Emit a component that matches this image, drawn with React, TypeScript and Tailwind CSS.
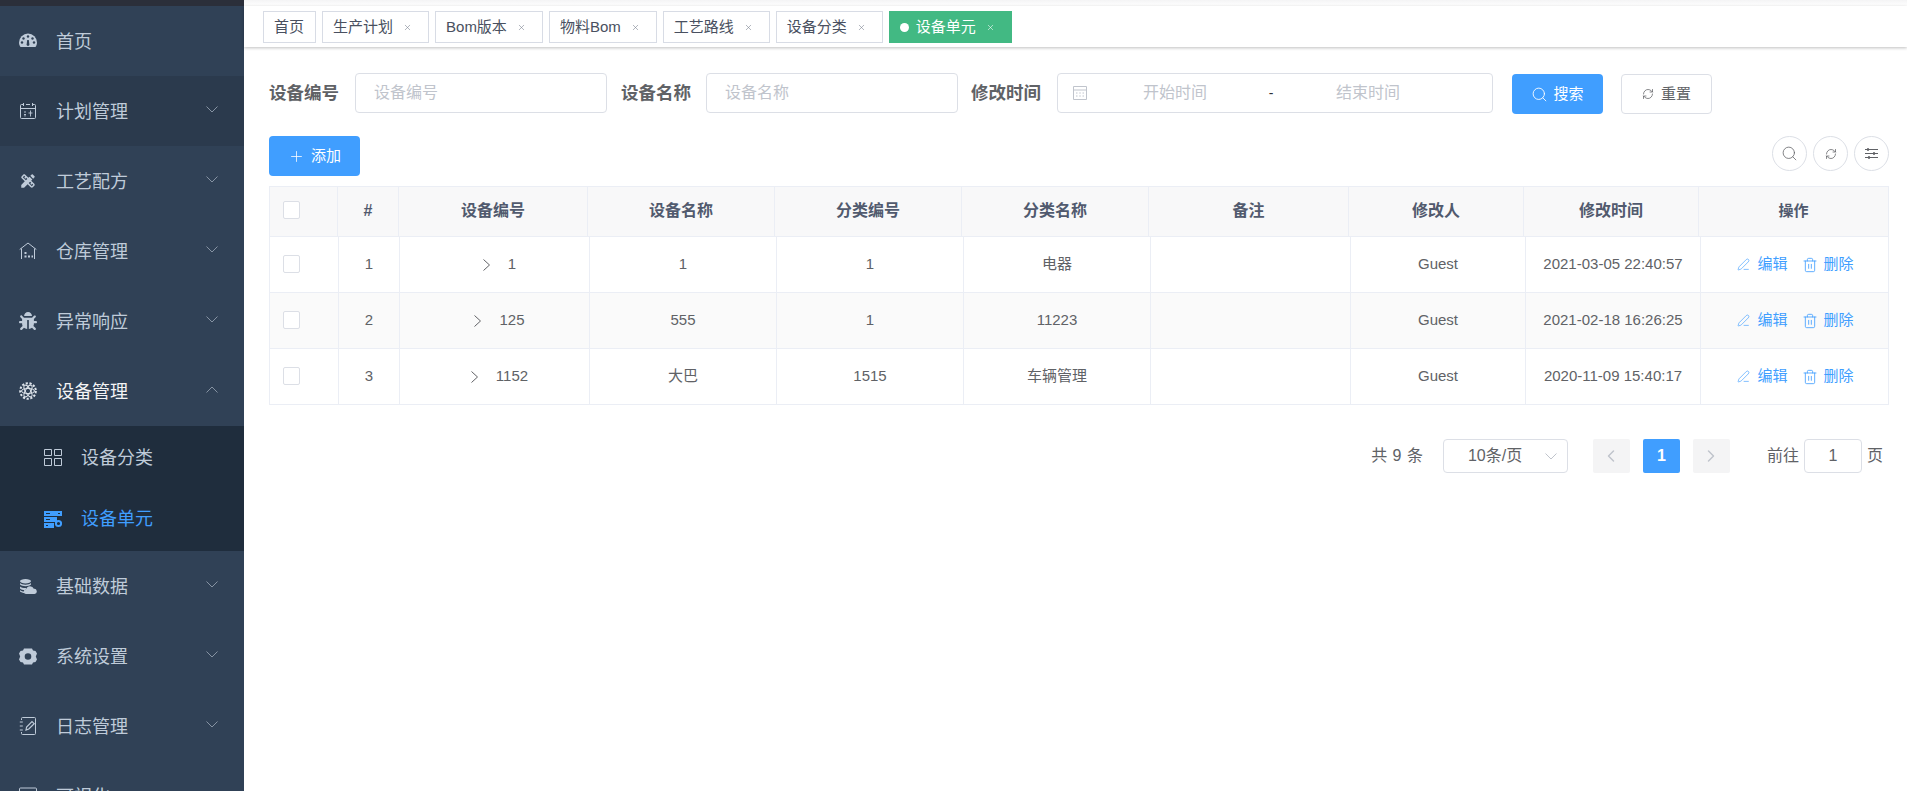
import React from "react";
import { ChevronLeft, ChevronRight, PenLine, Plus, RefreshCw, Search, Trash2, X } from "lucide-react";
import { FaBug } from "react-icons/fa";
import { MdDesignServices } from "react-icons/md";

const Chevron = ({ up = false }: { up?: boolean }) => (
  <svg width="12" height="7" viewBox="0 0 12 7" fill="none" stroke="#8693a3" strokeWidth="1" className="ml-auto mr-[26px] mt-[-4px] shrink-0">
    <path d={up ? "M.5 6.5 6 1l5.5 5.5" : "M.5.5 6 6 11.5.5"} />
  </svg>
);

const GaugeIcon = () => (
  <svg width="18" height="18" viewBox="0 0 18 18">
    <path d="M1.5 15C.6 13.8 0 12.2 0 10.5a9 9 0 0 1 18 0c0 1.700-.6 3.300-1.500 4.500z" fill="#bfcbd9" />
    <g fill="#304156">
      <circle cx="9" cy="4.500" r="1.200" /><circle cx="4.500" cy="6.500" r="1.200" /><circle cx="13.500" cy="6.500" r="1.200" />
      <circle cx="3" cy="10.500" r="1.200" /><circle cx="15" cy="10.500" r="1.200" />
      <path d="M8.200 8h1.600l.6 4.600a1.400 1.400 0 1 1-2.800 0z" />
    </g>
  </svg>
);

const PlanIcon = () => (
  <svg width="18" height="18" viewBox="0 0 18 18" fill="none" stroke="#bfcbd9" strokeWidth="1">
    <path d="M4 2.500H2.500a1 1 0 0 0-1 1v12a1 1 0 0 0 1 1h13a1 1 0 0 0 1-1v-12a1 1 0 0 0-1-1H14M7 2.500h4M4.500 1v3M13.500 1v3M1.500 6.500h15" />
    <path d="M5 10h2M5 12.500h2M6 12.500v2M9.500 11h4M11.500 8.500v6" strokeWidth=".9" />
  </svg>
);

const StoreIcon = () => (
  <svg width="18" height="18" viewBox="0 0 18 18" fill="none" stroke="#bfcbd9" strokeWidth="1">
    <path d="M.7 7.500 9 1l8.300 6.500M2.500 6.500v10.500M15.500 6.500v10.500" />
    <path d="M5.500 10h2v2h-2zM5.500 13.500h2v2h-2zM9 13.500h2v2H9zM12.500 13.500h1.500v2h-1.500z" fill="#bfcbd9" stroke="none" />
  </svg>
);

const AtomIcon = () => (
  <svg width="18" height="18" viewBox="0 0 18 18" fill="none" stroke="#dfe5ec" strokeWidth="1">
    <circle cx="9" cy="9" r="7.800" strokeWidth="2" strokeDasharray="2.200 1.600" />
    <ellipse cx="9" cy="9" rx="6.500" ry="2.600" />
    <ellipse cx="9" cy="9" rx="6.500" ry="2.600" transform="rotate(60 9 9)" />
    <ellipse cx="9" cy="9" rx="6.500" ry="2.600" transform="rotate(120 9 9)" />
  </svg>
);

const GridIcon = () => (
  <svg width="18" height="17" viewBox="0 0 18 17" fill="none" stroke="#bfcbd9" strokeWidth="1">
    <path d="M.5.500h7v6h-7zM10.500.500h7v6h-7zM.5 9.500h7v7h-7zM10.500 9.500h7v7h-7z" />
  </svg>
);

const UnitIcon = () => (
  <svg width="18" height="17" viewBox="0 0 18 17" fill="#409eff">
    <path d="M0 0h18v5H0zM0 6h13v5H0zM0 12h10v5H0z" />
    <path d="M2 2h4v1H2zM14 2h2v1h-2zM2 8h4v1H2zM2 14h2v1H2z" fill="#1f2d3d" />
    <circle cx="14.500" cy="12.500" r="2.600" fill="none" stroke="#409eff" strokeWidth="2" />
  </svg>
);

const DataIcon = () => (
  <svg width="18" height="15" viewBox="0 0 18 15" fill="#bfcbd9">
    <path d="M1 2.200C1 1 3.500 0 6.500 0S12 1 12 2.200 9.500 4.400 6.500 4.400 1 3.400 1 2.200z" />
    <path d="M1 4c1 1.200 3.400 1.700 5.500 1.700S11 5.200 12 4v1.500c-1 1-3.200 1.700-5.500 1.700S2 6.500 1 5.500zM1 7.500c1 1.100 3.400 1.600 5.500 1.600l1 0-1.500 2.200C3.900 11.200 2 10.500 1 9.500zM1 11c1 1 3 1.500 4.500 1.600L6 14c-2.200 0-4-.7-5-1.500z" />
    <path d="M7.500 15a2.500 2.500 0 0 1-.3-5A4 4 0 0 1 14.800 9.800 2.600 2.600 0 0 1 15.500 15z" />
  </svg>
);

const CogIcon = () => (
  <svg width="18" height="17" viewBox="0 0 18 17" fill="#bfcbd9">
    <path fillRule="evenodd" d="M5 .5h8l1 2 2.500.4L18 5.500l-1.200 3 1.200 3-1.500 2.600-2.500.4-1 2H5l-1-2-2.500-.4L0 11.500l1.200-3L0 5.500l1.500-2.600L4 2.500zM9 5.200a3.300 3.300 0 1 0 0 6.600 3.300 3.300 0 0 0 0-6.600z" />
  </svg>
);

const LogIcon = () => (
  <svg width="18" height="18" viewBox="0 0 18 18" fill="none" stroke="#bfcbd9" strokeWidth="1">
    <path d="M2.500 3V1.500a1 1 0 0 1 1-1h12a1 1 0 0 1 1 1v15a1 1 0 0 1-1 1h-12a1 1 0 0 1-1-1V15M.8 5h3M.8 9h3M.8 13h3" />
    <path d="m7 13 .6-3L13 4.500l2.200 2.200L9.800 12z" strokeWidth="1.200" />
  </svg>
);

const ScreenIcon = () => (
  <svg width="18" height="18" viewBox="0 0 18 18" fill="none" stroke="#bfcbd9" strokeWidth="1">
    <path d="M.5 2a1 1 0 0 1 1-1h15a1 1 0 0 1 1 1v10a1 1 0 0 1-1 1h-15a1 1 0 0 1-1-1z" />
  </svg>
);

const DateIcon = () => (
  <svg width="16" height="16" viewBox="0 0 16 16" fill="none" stroke="#c0c4cc" strokeWidth="1" className="shrink-0">
    <path d="M1.500 1.500h13v13h-13zM1.500 5h13" />
    <path d="M4 8h1.500M7.250 8h1.500M10.500 8H12M4 11h1.500M7.250 11h1.500M10.500 11H12" />
  </svg>
);

const menus = [
  { name: "首页", icon: <GaugeIcon /> },
  { name: "计划管理", icon: <PlanIcon />, arrow: true, hover: true },
  { name: "工艺配方", icon: <MdDesignServices size={18} color="#bfcbd9" />, arrow: true },
  { name: "仓库管理", icon: <StoreIcon />, arrow: true },
  { name: "异常响应", icon: <FaBug size={18} color="#bfcbd9" />, arrow: true },
];

const menusAfter = [
  { name: "基础数据", icon: <DataIcon /> },
  { name: "系统设置", icon: <CogIcon /> },
  { name: "日志管理", icon: <LogIcon /> },
  { name: "可视化", icon: <ScreenIcon /> },
];

const MenuRow = ({ name, icon, arrow, hover }: { name: string; icon: React.ReactNode; arrow?: boolean; hover?: boolean }) => (
  <div className={`h-[70px] flex items-center pl-[19px] text-[18px] text-[#bfcbd9] ${hover ? "bg-[#2b3a4d]" : ""}`}>
    <span className="w-[18px] h-[18px] flex items-center justify-center shrink-0">{icon}</span>
    <span className="ml-[19px] pt-[2px]">{name}</span>
    {arrow && <Chevron />}
  </div>
);

const Sidebar = () => (
  <aside className="w-[244px] shrink-0 h-full overflow-hidden bg-[#304156]">
    <div className="h-[6px] bg-[#2b2f3a]" />
    {menus.map((m) => (
      <MenuRow key={m.name} {...m} />
    ))}
    <div className="h-[70px] flex items-center pl-[19px] text-[18px] text-[#f4f4f5]">
      <span className="w-[18px] h-[18px] flex items-center justify-center shrink-0"><AtomIcon /></span>
      <span className="ml-[19px] pt-[2px]">设备管理</span>
      <Chevron up />
    </div>
    <div className="bg-[#1f2d3d] pb-px">
      <div className="h-[62px] flex items-center pl-[44px] text-[18px] text-[#bfcbd9]">
        <GridIcon />
        <span className="ml-[19px] pt-[2px]">设备分类</span>
      </div>
      <div className="h-[62px] flex items-center pl-[44px] text-[18px] text-[#409eff]">
        <UnitIcon />
        <span className="ml-[19px]">设备单元</span>
      </div>
    </div>
    {menusAfter.map((m) => (
      <MenuRow key={m.name} {...m} arrow />
    ))}
  </aside>
);

const tags = ["生产计划", "Bom版本", "物料Bom", "工艺路线", "设备分类"];

const TagsBar = () => (
  <div className="shrink-0">
    <div className="h-[6px] bg-gradient-to-b from-[#f4f4f5] to-white" />
    <div className="h-[41px] pt-[5px] pl-[19px] flex gap-[6px] items-start bg-white shadow-[0_1px_3px_0_rgba(0,0,0,0.25)] text-[15px]">
      <div className="h-[32px] pl-[10px] pr-[11px] flex items-center border border-[#d8dce5] text-[#495060]">首页</div>
      {tags.map((t) => (
        <div key={t} className="h-[32px] pl-[10px] pr-[16px] flex items-center border border-[#d8dce5] text-[#495060]">
          {t}
          <X size={9} strokeWidth={1.5} className="ml-[10px] text-[#777f8c]" />
        </div>
      ))}
      <div className="h-[32px] pl-[11px] pr-[17px] flex items-center bg-[#42b983] text-white">
        <span className="w-[9px] h-[9px] rounded-full bg-white mr-[7px]" />
        设备单元
        <X size={9} strokeWidth={1.5} className="ml-[10px]" />
      </div>
    </div>
  </div>
);

const FilterBar = () => (
  <div className="flex items-start h-[41px] text-[16px]">
    <label className="leading-[40px] text-[17.5px] font-bold text-[#606266]">设备编号</label>
    <input placeholder="设备编号" className="ml-[16px] w-[252px] h-[40px] px-[18px] border border-[#dcdfe6] rounded-[4px] outline-none placeholder:text-[#c0c4cc]" />
    <label className="ml-[14px] leading-[40px] text-[17.5px] font-bold text-[#606266]">设备名称</label>
    <input placeholder="设备名称" className="ml-[15px] w-[252px] h-[40px] px-[18px] border border-[#dcdfe6] rounded-[4px] outline-none placeholder:text-[#c0c4cc]" />
    <label className="ml-[13px] leading-[40px] text-[17.5px] font-bold text-[#606266]">修改时间</label>
    <div className="ml-[16px] w-[436px] h-[40px] pl-[14px] flex items-center border border-[#dcdfe6] rounded-[4px] text-[#c0c4cc]">
      <DateIcon />
      <span className="w-[174px] text-center">开始时间</span>
      <span className="w-[18px] text-center text-[#303133] text-[14px]">-</span>
      <span className="w-[176px] text-center">结束时间</span>
    </div>
    <button className="ml-[19px] mt-px w-[91px] h-[40px] flex items-center justify-center gap-[5px] rounded-[4px] bg-[#409eff] text-white text-[15px]">
      <Search size={17} strokeWidth={1.25} />
      搜索
    </button>
    <button className="ml-[18px] mt-px w-[91px] h-[40px] flex items-center justify-center gap-[7px] rounded-[4px] border border-[#dcdfe6] bg-white text-[#606266] text-[15px]">
      <RefreshCw size={12} strokeWidth={1.5} />
      重置
    </button>
  </div>
);

const CircleButton = ({ children }: { children: React.ReactNode }) => (
  <button className="w-[35px] h-[35px] rounded-full border border-[#dcdfe6] flex items-center justify-center text-[#606266]">{children}</button>
);

const Toolbar = () => (
  <div className="mt-[22px] flex justify-between items-start">
    <button className="w-[91px] h-[40px] flex items-center justify-center gap-[6px] rounded-[4px] bg-[#409eff] text-white text-[15px]">
      <Plus size={17} strokeWidth={1.1} />
      添加
    </button>
    <div className="flex gap-[6px]">
      <CircleButton><Search size={17} strokeWidth={1.1} /></CircleButton>
      <CircleButton><RefreshCw size={12} strokeWidth={1.5} /></CircleButton>
      <CircleButton>
        <svg width="13" height="13" viewBox="0 0 13 13" stroke="currentColor" strokeWidth="1">
          <path d="M0 2.500h13M0 6.500h13M0 10.500h13" />
          <path d="M3 1v3M9 5v3M4 9v3" strokeWidth="1.500" />
        </svg>
      </CircleButton>
    </div>
  </div>
);

const headers = ["", "#", "设备编号", "设备名称", "分类编号", "分类名称", "备注", "修改人", "修改时间", "操作"];

const rows = [
  { no: 1, code: "1", name: "1", cat: "1", catName: "电器", user: "Guest", time: "2021-03-05 22:40:57" },
  { no: 2, code: "125", name: "555", cat: "1", catName: "11223", user: "Guest", time: "2021-02-18 16:26:25" },
  { no: 3, code: "1152", name: "大巴", cat: "1515", catName: "车辆管理", user: "Guest", time: "2020-11-09 15:40:17" },
];

const cellLine = "flex items-center justify-center border-r border-[#ebeef5] last:border-r-0";
const Box = () => <span className="w-[17px] h-[18px] rounded-[2px] border border-[#dcdfe6] bg-white mb-[2px]" />;

const DataTable = () => (
  <div className="mt-[10px] border border-[#ebeef5] border-b-0 text-[15px]">
    <div className="grid grid-cols-[68px_61px_189px_187px_187px_187px_200px_175px_175px_189px] h-[50px] bg-[#f8f8f9] border-b border-[#ebeef5] text-[#515a6e] font-semibold text-[16px]">
      {headers.map((h, i) => (
        <div key={i} className={`${cellLine} pb-px ${i === 0 ? "!justify-start pl-[13px]" : ""} ${i === 9 ? "text-[15px]" : ""}`}>
          {i === 0 ? <Box /> : h}
        </div>
      ))}
    </div>
    {rows.map((r, idx) => (
      <div
        key={r.no}
        className={`grid grid-cols-[69px_61px_190px_187px_187px_187px_200px_175px_175px_187px] h-[56px] border-b border-[#ebeef5] text-[#606266] ${idx === 1 ? "bg-[#fafafa]" : ""}`}
      >
        <div className={`${cellLine} !justify-start pl-[13px]`}><Box /></div>
        <div className={cellLine}>{r.no}</div>
        <div className={`${cellLine} pl-[10px] gap-[18px]`}>
          <svg width="7" height="12" viewBox="0 0 7 12" fill="none" stroke="#606266" strokeWidth="1"><path d="m.5.500 6 5.500-6 5.500" /></svg>
          {r.code}
        </div>
        <div className={cellLine}>{r.name}</div>
        <div className={cellLine}>{r.cat}</div>
        <div className={cellLine}>{r.catName}</div>
        <div className={cellLine} />
        <div className={cellLine}>{r.user}</div>
        <div className={cellLine}>{r.time}</div>
        <div className={`${cellLine} pl-[2px] text-[#409eff]`}>
          <PenLine size={13} strokeWidth={1.2} />
          <span className="ml-[7px]">编辑</span>
          <Trash2 size={16} strokeWidth={1.25} className="ml-[14px]" />
          <span className="ml-[6px]">删除</span>
        </div>
      </div>
    ))}
  </div>
);

const Pager = () => (
  <div className="mt-[34px] mr-[6px] flex justify-end items-center h-[34px] text-[16px] text-[#606266]">
    <span className="[word-spacing:1px]">共 9 条</span>
    <div className="ml-[20px] w-[125px] h-[34px] pl-[24px] pr-[10px] flex items-center justify-between border border-[#dcdfe6] rounded-[4px]">
      10条/页
      <svg width="12" height="7" viewBox="0 0 12 7" fill="none" stroke="#c0c4cc" strokeWidth="1"><path d="M.5.500 6 6 11.500.5" /></svg>
    </div>
    <button className="ml-[25px] w-[37px] h-[34px] rounded-[2px] bg-[#f4f4f5] flex items-center justify-center text-[#c0c4cc]"><ChevronLeft size={20} strokeWidth={1.75} /></button>
    <button className="ml-[13px] w-[37px] h-[34px] rounded-[2px] bg-[#409eff] text-white font-bold">1</button>
    <button className="ml-[13px] w-[37px] h-[34px] rounded-[2px] bg-[#f4f4f5] flex items-center justify-center text-[#c0c4cc]"><ChevronRight size={20} strokeWidth={1.75} /></button>
    <span className="ml-[37px]">前往</span>
    <div className="ml-[5px] w-[58px] h-[34px] flex items-center justify-center border border-[#dcdfe6] rounded-[4px]">1</div>
    <span className="ml-[5px]">页</span>
  </div>
);

export default function App() {
  return (
    <div className="flex h-screen overflow-hidden bg-white font-['Liberation_Sans','Noto_Sans_CJK_SC',sans-serif]">
      <Sidebar />
      <main className="flex-1 min-w-0 flex flex-col">
        <TagsBar />
        <div className="pt-[26px] pl-[25px] pr-[18px]">
          <FilterBar />
          <Toolbar />
          <DataTable />
          <Pager />
        </div>
      </main>
    </div>
  );
}
